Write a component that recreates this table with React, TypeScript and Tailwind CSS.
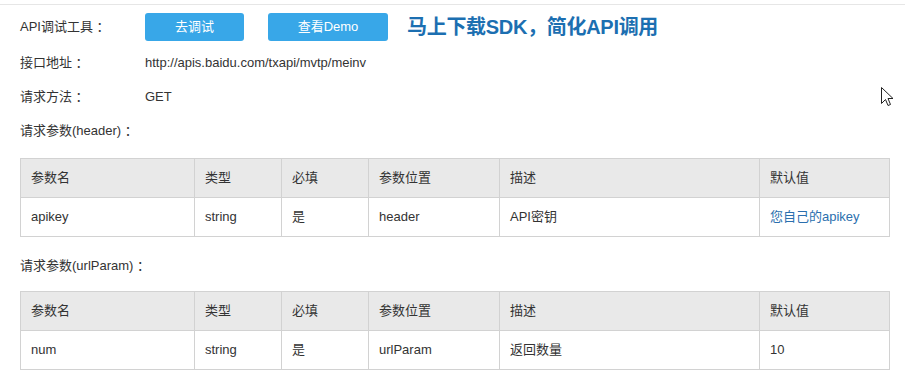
const font = "font-['Liberation_Sans','Noto_Sans_CJK_SC',sans-serif]";

type Row = { name: string; type: string; req: string; pos: string; desc: string; def: string; link?: boolean };

const ParamTable = ({ rows }: { rows: Row[] }) => (
  <table className="table-fixed border-collapse w-[870px] text-[13px] text-[#333]">
    <colgroup>
      <col className="w-[174px]" />
      <col className="w-[87px]" />
      <col className="w-[87px]" />
      <col className="w-[131px]" />
      <col className="w-[260px]" />
      <col className="w-[130px]" />
    </colgroup>
    <thead>
      <tr className="bg-[#e9e9e9] h-[39px]">
        {["参数名", "类型", "必填", "参数位置", "描述", "默认值"].map((h) => (
          <th key={h} className="border border-[#d2d2d2] px-[10px] text-left font-normal">
            {h}
          </th>
        ))}
      </tr>
    </thead>
    <tbody>
      {rows.map((r) => (
        <tr key={r.name} className="h-[39px]">
          <td className="border border-[#d2d2d2] px-[10px]">{r.name}</td>
          <td className="border border-[#d2d2d2] px-[10px]">{r.type}</td>
          <td className="border border-[#d2d2d2] px-[10px]">{r.req}</td>
          <td className="border border-[#d2d2d2] px-[10px]">{r.pos}</td>
          <td className="border border-[#d2d2d2] px-[10px]">{r.desc}</td>
          <td className={`border border-[#d2d2d2] px-[10px] ${r.link ? "text-[#2b6fae]" : ""}`}>{r.def}</td>
        </tr>
      ))}
    </tbody>
  </table>
);

export default function App() {
  return (
    <div className={`relative w-[905px] h-[377px] overflow-hidden bg-white text-[13px] text-[#333] ${font}`}>
      <div className="mt-[4px] h-px bg-[#e6e6e6]" />

      <div className="pl-[20px]">
        {/* 调试工具 */}
        <div className="mt-[8px] flex items-center h-[28px]">
          <div className="w-[125px]">API调试工具 ：</div>
          <button className="w-[99px] h-[28px] rounded-[3px] bg-[#38a7e8] text-white text-[13px]">去调试</button>
          <button className="ml-[24px] w-[120px] h-[28px] rounded-[3px] bg-[#38a7e8] text-white text-[13px]">查看Demo</button>
          <span className="ml-[19px] text-[20px] font-bold tracking-[-0.3px] text-[#1c6fb1]">马上下载SDK，简化API调用</span>
        </div>

        <div className="flex items-center h-[34px] mt-[5px]">
          <div className="w-[125px]">接口地址 ：</div>
          <div>http://apis.baidu.com/txapi/mvtp/meinv</div>
        </div>
        <div className="flex items-center h-[34px]">
          <div className="w-[125px]">请求方法 ：</div>
          <div>GET</div>
        </div>
        <div className="flex items-center h-[34px]">
          <div>请求参数(header) ：</div>
        </div>

        <div className="mt-[10px]">
          <ParamTable
            rows={[{ name: "apikey", type: "string", req: "是", pos: "header", desc: "API密钥", def: "您自己的apikey", link: true }]}
          />
        </div>

        <div className="flex items-center h-[34px] mt-[12px]">
          <div>请求参数(urlParam) ：</div>
        </div>

        <div className="mt-[8px]">
          <ParamTable
            rows={[{ name: "num", type: "string", req: "是", pos: "urlParam", desc: "返回数量", def: "10" }]}
          />
        </div>
      </div>

      {/* mouse pointer */}
      <svg className="absolute left-[881px] top-[87px]" width="13" height="21" viewBox="0 0 13 21">
        <path d="M0.5 0.5 L0.5 16.5 L4.5 12.5 L7 18.5 L9.5 17.5 L7 11.5 L12 11.5 Z" fill="#fff" stroke="#222" strokeWidth="1" />
      </svg>
    </div>
  );
}
